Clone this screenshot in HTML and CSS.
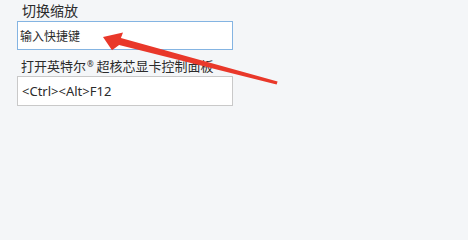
FILE: index.html
```html
<!DOCTYPE html>
<html lang="zh-CN">
<head>
<meta charset="utf-8">
<link rel="stylesheet" href="styles.css">
</head>
<body>
<div class="panel">
  <div class="label label-first">切换缩放</div>
  <div class="field field-focus">输入快捷键</div>
  <div class="label label-second">打开英特尔<span class="reg">®</span> 超核芯显卡控制面板</div>
  <div class="field field-keys">&lt;Ctrl&gt;&lt;Alt&gt;F12</div>
</div>
<svg class="arrow" width="468" height="236" viewBox="0 0 468 236">
  <polygon fill="#e9382a" points="103,37 123,32.4 120.9,38.1 277.6,81.4 276.6,84.6 119.1,44.9 112,50.2"/>
</svg>
</body>
</html>
```
FILE: styles.css
```css
html, body {
  margin: 0;
  padding: 0;
}
body {
  width: 468px;
  height: 236px;
  background: #f4f6f8;
  font-family: "Noto Sans CJK SC", "Noto Sans", sans-serif;
  color: #2b2b2b;
  position: relative;
  overflow: hidden;
}
.panel {
  display: flex;
  flex-direction: column;
  padding: 0 0 0 17px;
  width: 216px;
}
.label {
  padding-left: 4px;
  white-space: nowrap;
}
.label-first {
  font-size: 14px;
  line-height: 20px;
  height: 21px;
  padding-left: 5px;
}
.label-second {
  font-size: 13px;
  line-height: 20px;
  height: 20px;
  margin-top: 4px;
  margin-bottom: 2px;
}
.reg {
  font-size: 8px;
  vertical-align: 4px;
  font-family: "Noto Sans", sans-serif;
  margin-left: 1px;
}
.field {
  box-sizing: border-box;
  background: #ffffff;
  width: 216px;
  display: flex;
  align-items: center;
  padding-left: 2px;
  white-space: nowrap;
}
.field-focus {
  height: 29px;
  border: 1px solid #84b4e2;
  font-size: 12px;
}
.field-keys {
  height: 30px;
  border: 1px solid #c9c9c9;
  font-size: 13px;
  font-family: "Noto Sans", "Noto Sans CJK SC", sans-serif;
  padding-left: 4px;
}
.arrow {
  position: absolute;
  left: 0;
  top: 0;
  pointer-events: none;
}
```
